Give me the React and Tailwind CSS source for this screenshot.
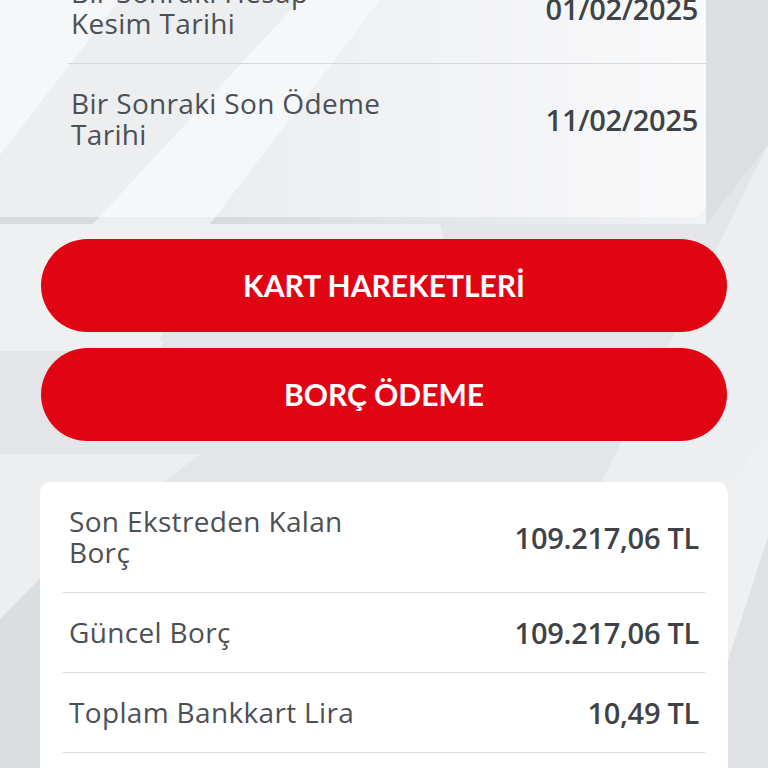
import React from 'react';

const topRows = [
  { label: ['Bir Sonraki Hesap', 'Kesim Tarihi'], value: '01/02/2025' },
  { label: ['Bir Sonraki Son Ödeme', 'Tarihi'], value: '11/02/2025' },
];

const debtRows = [
  { label: ['Son Ekstreden Kalan', 'Borç'], value: '109.217,06 TL' },
  { label: ['Güncel Borç'], value: '109.217,06 TL' },
  { label: ['Toplam Bankkart Lira'], value: '10,49 TL' },
];

function Backdrop() {
  return (
    <svg
      className="absolute inset-0 h-full w-full"
      viewBox="0 0 768 768"
      preserveAspectRatio="none"
      aria-hidden="true"
    >
      <defs>
        <linearGradient id="fade" x1="0" y1="0" x2="1" y2="0">
          <stop offset="0" stopColor="#d7dadd" />
          <stop offset="1" stopColor="#f2f3f5" />
        </linearGradient>
        <linearGradient id="fadeV" x1="0" y1="0" x2="0" y2="1">
          <stop offset="0" stopColor="#eef0f2" />
          <stop offset="1" stopColor="#e2e4e7" />
        </linearGradient>
      </defs>
      <rect width="768" height="768" fill="#e3e5e8" />
      <polygon points="0,0 120,0 0,150" fill="#eceef0" />
      <polygon points="120,0 300,0 93,217 0,217 0,150" fill="#d9dcdf" />
      <polygon points="300,0 380,0 210,217 93,217" fill="#eceef0" />
      <polygon points="380,0 706,0 706,217 210,217" fill="url(#fade)" />
      <polygon points="0,217 200,217 160,340 0,340" fill="#eef0f2" />
      <polygon points="200,217 440,217 470,330 160,330" fill="url(#fadeV)" />
      <polygon points="706,0 768,0 768,140 706,217" fill="#dcdfe2" />
      <polygon points="768,140 768,470 600,470" fill="#eceef0" />
      <polygon points="0,440 200,440 40,560 0,600" fill="#eceef0" />
      <polygon points="0,600 40,560 40,768 0,768" fill="#dbdee1" />
      <polygon points="728,470 768,420 768,520 728,640" fill="#eef0f2" />
      <polygon points="728,640 768,520 768,768 728,768" fill="#dfe1e4" />
    </svg>
  );
}

function Label({ lines }) {
  return (
    <div className="font-['Open_Sans',sans-serif] text-[28px] leading-[31px] tracking-[0.012em] text-[#4c5055]">
      {lines.map((l) => (
        <div key={l}>{l}</div>
      ))}
    </div>
  );
}

function Value({ children }) {
  return (
    <div className="font-['Open_Sans',sans-serif] text-[29px] font-semibold leading-[31px] tracking-[-0.01em] text-[#3f4247]">
      {children}
    </div>
  );
}

function InfoRow({ label, value }) {
  return (
    <div className="mx-[23px] flex items-center justify-between border-b border-[#d9dadc] px-[6px] py-6">
      <Label lines={label} />
      <Value>{value}</Value>
    </div>
  );
}

export default function App() {
  return (
    <div className="relative min-h-[768px] w-full overflow-hidden font-['Lato',sans-serif]">
      <Backdrop />
      <div className="relative -mt-[47px]">
        <div className="mr-[62px] rounded-br-[14px] bg-white/50 pb-[43px] pl-10">
          {topRows.map((r, i) => (
            <div
              key={r.value}
              className={`ml-[28px] flex items-center justify-between py-6 pl-[3px] pr-[8px] ${
                i === 0 ? 'border-b border-[#d6d8db]' : ''
              }`}
            >
              <Label lines={r.label} />
              <Value>{r.value}</Value>
            </div>
          ))}
        </div>

        <div className="mt-[22px] flex flex-col gap-4 px-[41px]">
          <button className="h-[93px] w-full rounded-full bg-[#e10514] text-[30px] font-bold text-white">
            KART HAREKETLERİ
          </button>
          <button className="h-[93px] w-full rounded-full bg-[#e10514] text-[30px] font-bold text-white">
            BORÇ ÖDEME
          </button>
        </div>

        <div className="mx-10 mt-[41px] rounded-[10px] bg-white pb-10">
          {debtRows.map((r) => (
            <InfoRow key={r.label[0]} label={r.label} value={r.value} />
          ))}
        </div>
      </div>
    </div>
  );
}
